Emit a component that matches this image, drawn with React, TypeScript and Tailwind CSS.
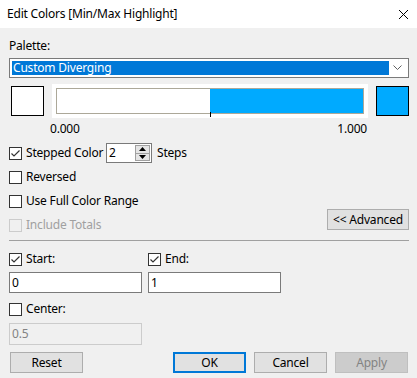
import React from "react";

const FONT = { fontFamily: '"Noto Sans", "Segoe UI", sans-serif' };

function Check({ checked = false, disabled = false }: { checked?: boolean; disabled?: boolean }) {
  return (
    <div
      className={
        "w-[13px] h-[13px] shrink-0 border flex items-center justify-center " +
        (disabled ? "border-[#cccccc] bg-[#f0f0f0]" : "border-[#333333] bg-white")
      }
    >
      {checked && (
        <svg width="11" height="11" viewBox="0 0 11 11">
          <polyline points="1.5,5.5 4,8 9.5,2.5" fill="none" stroke="#333333" strokeWidth="1.2" />
        </svg>
      )}
    </div>
  );
}

function CheckRow({
  label,
  checked,
  disabled,
  className = "",
}: {
  label: string;
  checked?: boolean;
  disabled?: boolean;
  className?: string;
}) {
  return (
    <div className={"flex items-center gap-[4px] h-[20px] " + className}>
      <Check checked={checked} disabled={disabled} />
      <span className={"text-[12px] leading-[16px] whitespace-nowrap " + (disabled ? "text-[#a0a0a0]" : "text-black")}>{label}</span>
    </div>
  );
}

function Btn({
  children,
  className = "",
  variant = "normal",
}: {
  children: React.ReactNode;
  className?: string;
  variant?: "normal" | "default" | "disabled";
}) {
  const v =
    variant === "default"
      ? "border-2 border-[#0078d7] bg-[#e1e1e1] text-black"
      : variant === "disabled"
      ? "border border-[#bfbfbf] bg-[#cccccc] text-[#838383]"
      : "border border-[#adadad] bg-[#e1e1e1] text-black";
  return (
    <div className={"h-[21px] flex items-center justify-center text-[12px] leading-[16px] " + v + " " + className}>
      {children}
    </div>
  );
}

export default function App() {
  return (
    <div className="w-[417px] h-[378px] bg-[#f0f0f0] flex flex-col overflow-hidden tracking-[-0.2px]" style={FONT}>
      {/* Title bar */}
      <div className="h-[28px] bg-white flex items-center justify-between pl-[7px] pr-[7px] shrink-0">
        <span className="text-[12px] leading-[16px] text-black">Edit Colors [Min/Max Highlight]</span>
        <svg width="11" height="11" viewBox="0 0 11 11" className="mr-[1px]">
          <path d="M1 1 L10 10 M10 1 L1 10" stroke="#000" strokeWidth="1" fill="none" />
        </svg>
      </div>

      <div className="flex flex-col pl-[9px] pr-[8px]">
        {/* Palette */}
        <div className="mt-[10px] h-[16px] text-[12px] leading-[16px] text-black">Palette:</div>
        <div className="mt-[4px] h-[20px] w-[400px] border border-[#7a7a7a] bg-white flex items-center p-[2px]">
          <div className="h-[14px] flex-1 bg-[#0078d7] text-white text-[12px] leading-[14px] pl-[1px]">Custom Diverging</div>
          <div className="w-[17px] flex items-center justify-center">
            <svg width="9" height="6" viewBox="0 0 9 6">
              <polyline points="0.5,0.5 4.5,4.5 8.5,0.5" fill="none" stroke="#606060" strokeWidth="1" />
            </svg>
          </div>
        </div>

        {/* Swatches */}
        <div className="mt-[6px] h-[34px] flex items-center">
          <div className="ml-[2px] w-[33px] h-[30px] border border-black bg-white" />
          <div className="ml-[8px] w-[316px] h-[34px] bg-white p-[4px]">
            <div className="relative h-[26px] border border-[#aca899] flex">
              <div className="w-[153px] bg-white" />
              <div className="flex-1 bg-[#00aaff]" />
              <div className="absolute left-[153px] bottom-[-4px] w-[1px] h-[5px] bg-black" />
            </div>
          </div>
          <div className="ml-[8px] w-[33px] h-[30px] border border-black bg-[#00aaff]" />
        </div>

        {/* Numbers */}
        <div className="mt-[3px] h-[16px] flex justify-between text-[12px] leading-[16px] text-black pl-[41px] pr-[42px]">
          <span>0.000</span>
          <span>1.000</span>
        </div>

        {/* Stepped */}
        <div className="mt-[6px] h-[20px] flex items-center">
          <CheckRow label="Stepped Color" checked className="w-[97px]" />
          <div className="w-[46px] h-[20px] border border-[#7a7a7a] bg-white flex items-center">
            <span className="flex-1 pl-[2px] text-[12px] leading-[16px] text-black">2</span>
            <div className="w-[15px] h-[16px] mr-[1px] border border-[#a0a0a0] bg-[#e5e5e5] flex flex-col">
              <div className="flex-1 flex items-center justify-center border-b border-[#a0a0a0]">
                <svg width="7" height="4" viewBox="0 0 7 4">
                  <polygon points="3.5,0 7,4 0,4" fill="#000" />
                </svg>
              </div>
              <div className="flex-1 flex items-center justify-center">
                <svg width="7" height="4" viewBox="0 0 7 4">
                  <polygon points="0,0 7,0 3.5,4" fill="#000" />
                </svg>
              </div>
            </div>
          </div>
          <span className="ml-[5px] text-[12px] leading-[16px] text-black">Steps</span>
        </div>

        <CheckRow label="Reversed" className="mt-[4px]" />
        <CheckRow label="Use Full Color Range" className="mt-[4px]" />

        <div className="h-[21px] flex items-start justify-between">
          <CheckRow label="Include Totals" disabled className="mt-[4px]" />
          <Btn className="w-[82px] mt-[-2px]">&lt;&lt; Advanced</Btn>
        </div>

        {/* Separator */}
        <div className="mt-[8px] h-[1px] w-[400px] bg-[#a0a0a0]" />

        {/* Start / End */}
        <div className="mt-[8px] flex">
          <CheckRow label="Start:" checked className="w-[139px]" />
          <CheckRow label="End:" checked />
        </div>
        <div className="mt-[3px] flex gap-[6px]">
          <div className="w-[133px] h-[21px] border border-[#7a7a7a] bg-white flex items-center pl-[2px] text-[12px] leading-[16px] text-black">0</div>
          <div className="w-[133px] h-[21px] border border-[#7a7a7a] bg-white flex items-center pl-[2px] text-[12px] leading-[16px] text-black">1</div>
        </div>

        <CheckRow label="Center:" className="mt-[6px]" />
        <div className="mt-[4px] w-[133px] h-[22px] border border-[#cccccc] bg-[#f0f0f0] flex items-center pl-[2px] text-[12px] leading-[16px] text-[#838383]">0.5</div>

        {/* Buttons */}
        <div className="mt-[7px] flex">
          <Btn className="ml-[1px] w-[73px]">Reset</Btn>
          <Btn variant="default" className="ml-[90px] w-[73px]">OK</Btn>
          <Btn className="ml-[8px] w-[73px]">Cancel</Btn>
          <Btn variant="disabled" className="ml-[8px] w-[73px]">Apply</Btn>
        </div>
      </div>
    </div>
  );
}
